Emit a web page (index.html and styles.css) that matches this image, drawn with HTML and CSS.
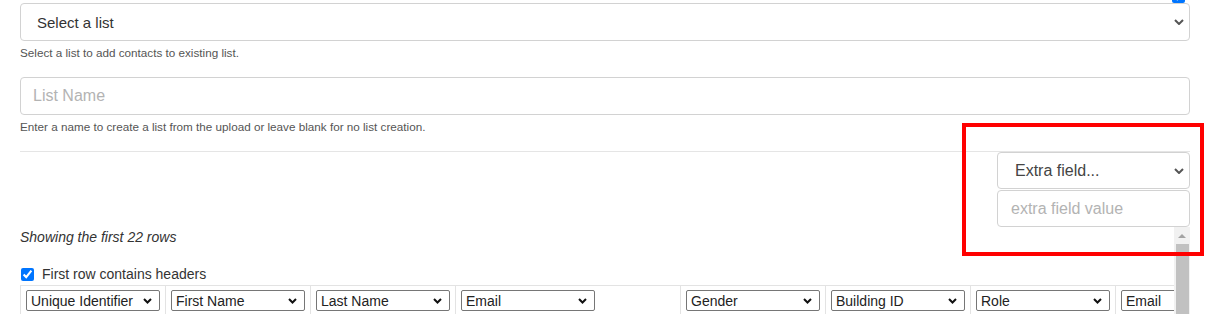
FILE: index.html
```html
<!DOCTYPE html>
<html lang="en">

<head>
  <meta charset="UTF-8">
  <meta name="viewport" content="width=device-width, initial-scale=1.0">
  <title>Import contacts</title>
  <link rel="stylesheet" href="styles.css">
</head>

<body>
  <!-- row above, mostly scrolled out of view -->
  <div class="top-row">
    <input class="top-check" type="checkbox" checked>
  </div>

  <!-- existing list -->
  <div class="form-group">
    <select class="form-select list-select">
      <option>Select a list</option>
    </select>
    <p class="help-text">Select a list to add contacts to existing list.</p>
  </div>

  <!-- new list -->
  <div class="form-group">
    <input class="form-input" type="text" placeholder="List Name">
    <p class="help-text">Enter a name to create a list from the upload or leave blank for no list creation.</p>
  </div>

  <hr class="divider">

  <!-- extra field -->
  <div class="extra-field">
    <select class="form-select extra-select">
      <option>Extra field...</option>
    </select>
    <input class="form-input extra-input" type="text" placeholder="extra field value">
  </div>

  <!-- preview table with its scrollbar -->
  <div class="preview">
    <div class="preview-body">
      <p class="preview-note">Showing the first 22 rows</p>
      <label class="header-check">
        <input type="checkbox" checked>
        <span>First row contains headers</span>
      </label>
      <table class="map-table">
        <tr>
          <td><select class="col-select"><option>Unique Identifier</option></select></td>
          <td><select class="col-select"><option>First Name</option></select></td>
          <td><select class="col-select"><option>Last Name</option></select></td>
          <td class="wide"><select class="col-select"><option>Email</option></select></td>
          <td><select class="col-select"><option>Gender</option></select></td>
          <td><select class="col-select"><option>Building ID</option></select></td>
          <td><select class="col-select"><option>Role</option></select></td>
          <td><select class="col-select"><option>Email</option></select></td>
        </tr>
      </table>
    </div>
    <div class="scrollbar">
      <div class="scroll-up"></div>
      <div class="scroll-thumb"></div>
    </div>
  </div>

  <!-- annotation -->
  <div class="highlight"></div>
</body>

</html>
```

FILE: styles.css
```css
/* reset */
* {
  margin: 0;
  padding: 0;
  box-sizing: border-box;
}

body {
  position: relative;
  padding: 0 17px 0 20px;
  font-family: "Liberation Sans", Arial, sans-serif;
  color: #333;
  background: #fff;
  overflow: hidden;
}

/* checkbox from the row above, only its bottom edge shows */
.top-row {
  display: flex;
  justify-content: flex-end;
  height: 3px;
  padding-right: 5px;
}

.top-check {
  width: 13px;
  height: 13px;
  margin-top: -10px;
}

/* form fields */
.form-group {
  display: flex;
  flex-direction: column;
}

.form-select,
.form-input {
  width: 100%;
  height: 38px;
  border: 1px solid #d2d2d2;
  border-radius: 4px;
  background-color: #fff;
  font-family: inherit;
  font-size: 16px;
  color: #333;
  outline: none;
}

.form-select {
  appearance: none;
  -webkit-appearance: none;
  padding: 0 30px 0 16px;
  background-image: url("data:image/svg+xml,%3Csvg xmlns='http://www.w3.org/2000/svg' width='10' height='6' viewBox='0 0 10 6'%3E%3Cpath d='M1 1l4 4 4-4' fill='none' stroke='%23555' stroke-width='2'/%3E%3C/svg%3E");
  background-repeat: no-repeat;
  background-position: right 5px center;
}

.list-select {
  font-size: 15px;
}

.form-input {
  padding: 0 12px;
}

.form-input::placeholder {
  color: #b3b3b3;
}

.help-text {
  margin-top: 4px;
  font-size: 11.7px;
  line-height: 15px;
  color: #555;
}

.form-group + .form-group {
  margin-top: 17px;
}

.divider {
  margin-top: 17px;
  border: none;
  border-top: 1px solid #e5e5e5;
}

/* extra field stack */
.extra-field {
  display: flex;
  flex-direction: column;
  align-items: flex-end;
  gap: 1px;
}

.extra-select,
.extra-input {
  width: 193px;
  height: 37px;
}

.extra-select {
  color: #444;
  padding-left: 17px;
}

.extra-input {
  padding-left: 13px;
}

/* preview area */
.preview {
  display: flex;
  height: 120px;
}

.preview-body {
  flex: 1;
  min-width: 0;
  overflow: hidden;
}

/* drawn scrollbar */
.scrollbar {
  width: 16px;
  display: flex;
  flex-direction: column;
  background: #f1f1f1;
}

.scroll-up {
  height: 17px;
  background-image: url("data:image/svg+xml,%3Csvg xmlns='http://www.w3.org/2000/svg' width='8' height='4' viewBox='0 0 8 4'%3E%3Cpath d='M0 4L4 0l4 4z' fill='%23a3a3a3'/%3E%3C/svg%3E");
  background-repeat: no-repeat;
  background-position: center 7px;
}

.scroll-thumb {
  flex: 1;
  margin: 0 1px 0 2px;
  background: #c1c1c1;
}

.preview-note {
  margin-top: 2px;
  font-size: 14px;
  font-style: italic;
  line-height: 17px;
  color: #333;
}

.header-check {
  display: flex;
  align-items: center;
  gap: 8px;
  margin-top: 20px;
  font-size: 14px;
  line-height: 16px;
  color: #333;
}

.header-check input {
  width: 13px;
  height: 13px;
  margin-left: 1px;
}

.map-table {
  margin-top: 3px;
  border-collapse: collapse;
  table-layout: fixed;
  width: 1230px;
}

.map-table td {
  width: 145px;
  padding: 4px 5px 3px;
  border: 1px solid #e3e3e3;
  border-bottom: none;
  font-size: 14px;
  color: #333;
  white-space: nowrap;
  vertical-align: top;
}

.map-table td.wide {
  width: 225px;
}

.col-select {
  appearance: none;
  -webkit-appearance: none;
  width: 134px;
  height: 21px;
  padding: 0 18px 0 4px;
  border: 1px solid #767676;
  border-radius: 2px;
  background-color: #fff;
  background-image: url("data:image/svg+xml,%3Csvg xmlns='http://www.w3.org/2000/svg' width='9' height='6' viewBox='0 0 9 6'%3E%3Cpath d='M1 1l3.5 3.5L8 1' fill='none' stroke='%23111' stroke-width='2'/%3E%3C/svg%3E");
  background-repeat: no-repeat;
  background-position: right 7px center;
  font-family: inherit;
  font-size: 14px;
  color: #222;
}

/* red annotation box */
.highlight {
  position: absolute;
  left: 962px;
  top: 123px;
  width: 242px;
  height: 133px;
  border: 4px solid #ff0000;
}
```
